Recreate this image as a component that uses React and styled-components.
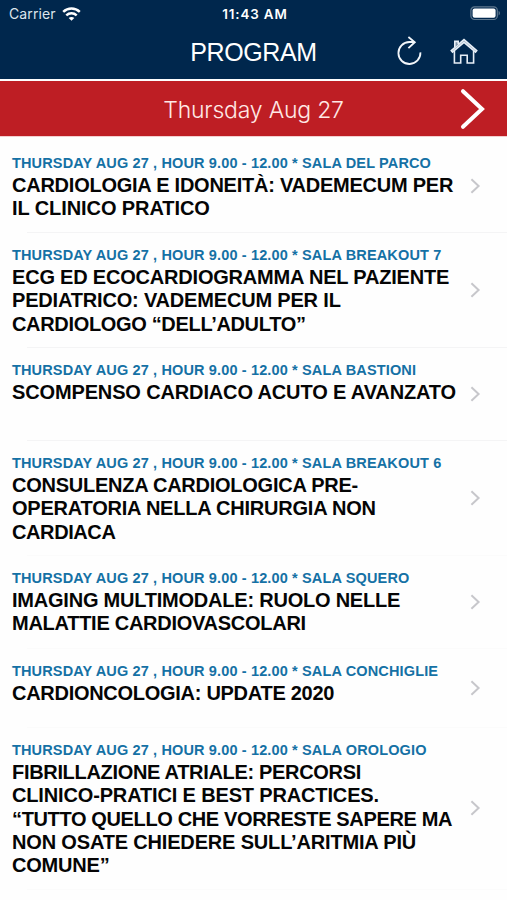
import React from 'react';
import styled, { createGlobalStyle } from 'styled-components';

// Each title line is [text, letter spacing in px]
const sessions = [
    {
        room: 'SALA DEL PARCO',
        height: 92,
        lines: [
            ['CARDIOLOGIA E IDONEITÀ: VADEMECUM PER', -0.24],
            ['IL CLINICO PRATICO', -0.08],
        ],
    },
    {
        room: 'SALA BREAKOUT 7',
        height: 115,
        lines: [
            ['ECG ED ECOCARDIOGRAMMA NEL PAZIENTE', -0.2],
            ['PEDIATRICO: VADEMECUM PER IL', -0.18],
            ['CARDIOLOGO “DELL’ADULTO”', -0.33],
        ],
    },
    {
        room: 'SALA BASTIONI',
        height: 93,
        lines: [['SCOMPENSO CARDIACO ACUTO E AVANZATO', -0.14]],
    },
    {
        room: 'SALA BREAKOUT 6',
        height: 115,
        faint: true,
        lines: [
            ['CONSULENZA CARDIOLOGICA PRE-', -0.25],
            ['OPERATORIA NELLA CHIRURGIA NON', -0.22],
            ['CARDIACA', -0.4],
        ],
    },
    {
        room: 'SALA SQUERO',
        height: 93,
        faint: true,
        lines: [
            ['IMAGING MULTIMODALE: RUOLO NELLE', -0.22],
            ['MALATTIE CARDIOVASCOLARI', -0.27],
        ],
    },
    {
        room: 'SALA CONCHIGLIE',
        height: 79,
        faint: true,
        lines: [['CARDIONCOLOGIA: UPDATE 2020', -0.28]],
    },
    {
        room: 'SALA OROLOGIO',
        height: 162,
        faint: true,
        lines: [
            ['FIBRILLAZIONE ATRIALE: PERCORSI', -0.32],
            ['CLINICO-PRATICI E BEST PRACTICES.', -0.15],
            ['“TUTTO QUELLO CHE VORRESTE SAPERE MA', -0.36],
            ['NON OSATE CHIEDERE SULL’ARITMIA PIÙ', -0.17],
            ['COMUNE”', -0.2],
        ],
    },
];

const App = () => (
    <Screen>
        <GlobalStyle />
        <StatusBar />
        <NavBar />
        <DayBar>
            <DayLabel>Thursday Aug 27</DayLabel>
            <NextDay>
                <NextIcon />
            </NextDay>
        </DayBar>
        <List>
            {sessions.map((session) => (
                <SessionRow key={session.room} {...session} />
            ))}
        </List>
    </Screen>
);

const StatusBar = () => (
    <Status>
        <Carrier>
            Carrier
            <WifiIcon />
        </Carrier>
        <Clock>11:43 AM</Clock>
        <BatterySlot>
            <BatteryIcon />
        </BatterySlot>
    </Status>
);

const NavBar = () => (
    <Nav>
        <NavTitle>PROGRAM</NavTitle>
        <NavActions>
            <IconButton aria-label="Refresh">
                <RefreshIcon />
            </IconButton>
            <IconButton aria-label="Home">
                <HomeIcon />
            </IconButton>
        </NavActions>
    </Nav>
);

const SessionRow = ({ room, lines, height, faint }) => (
    <Row $height={height} $faint={faint}>
        <Body>
            <Meta>THURSDAY AUG 27 , HOUR 9.00 - 12.00 * {room}</Meta>
            <Title>
                {lines.map(([text, tracking]) => (
                    <TitleLine key={text} $tracking={tracking}>
                        {text}
                    </TitleLine>
                ))}
            </Title>
        </Body>
        <Disclosure>
            <ChevronIcon />
        </Disclosure>
    </Row>
);

const WifiIcon = () => (
    <svg width="19" height="14" viewBox="0 0 19 14" fill="none" stroke="#fff" strokeWidth="2.5">
        <path d="M1.2 4.9C6 .4 13 .4 17.8 4.9" />
        <path d="M4.3 8.4c3-2.8 7.4-2.8 10.4 0" />
        <path d="M9.5 13.8 6.7 11c1.6-1.5 4-1.5 5.6 0z" fill="#fff" stroke="none" />
    </svg>
);

const BatteryIcon = () => (
    <svg width="31" height="15" viewBox="0 0 31 15">
        <rect x=".9" y=".9" width="26.4" height="12.6" rx="3.6" fill="none" stroke="#5f788f" strokeWidth="1.2" />
        <rect x="2.6" y="2.6" width="23" height="9.2" rx="2" fill="#fff" />
        <path d="M28.6 5c1.7.6 1.7 3.8 0 4.4z" fill="#5f788f" />
    </svg>
);

const RefreshIcon = () => (
    <svg width="26" height="30" viewBox="0 0 26 30" fill="none" stroke="#f2f6fa" strokeWidth="1.8">
        <path d="M24.4 16.4A11 11 0 1 1 13.4 6H18.4" />
        <path d="M12.4 1 18.8 6.2l-6.4 6" />
    </svg>
);

const HomeIcon = () => (
    <svg width="28" height="26" viewBox="0 0 28 26" fill="none" stroke="#e6eef6" strokeWidth="1.6">
        <path d="M1.3 12.7 14 1.6l12.7 11.1-1.2 1.4L14 4.4 2.5 14.1z" fill="#7f93a8" />
        <path d="M4.8 9.2V3.4h3.4v2.8" fill="#7f93a8" />
        <path d="M4.4 13v12h6.3v-7.8h6.5V25h6.4V13" />
    </svg>
);

const NextIcon = () => (
    <svg width="26" height="42" viewBox="0 0 26 42" fill="none" stroke="#fff" strokeWidth="4" strokeLinecap="round">
        <path d="M3 3.2 22 21 3 38.8" />
    </svg>
);

const ChevronIcon = () => (
    <svg width="11" height="16" viewBox="0 0 11 16" fill="none" stroke="#c7c7cb" strokeWidth="2">
        <path d="M1.4 1.3 8.6 8l-7.2 6.7" />
    </svg>
);

const GlobalStyle = createGlobalStyle`
    body {
        margin: 0;
        background: #fefefe;
        font-family: 'Liberation Sans', Arial, sans-serif;
    }
`;

const Screen = styled.div`
    display: flex;
    flex-direction: column;
    width: 507px;
    height: 900px;
    overflow: hidden;
    background: #fefefe;
`;

const Status = styled.div`
    display: grid;
    grid-template-columns: 1fr auto 1fr;
    align-items: center;
    height: 27px;
    padding: 0 6px 0 9px;
    box-sizing: border-box;
    background: #00274d;
    color: #fff;
    font-family: Inter, sans-serif;
    font-size: 13.4px;
`;

const Carrier = styled.div`
    display: flex;
    align-items: center;
    gap: 6px;
    color: #dde5ec;
    font-size: 14px;
    letter-spacing: 0.1px;
`;

const Clock = styled.div`
    font-weight: 600;
    letter-spacing: 0.85px;
`;

const BatterySlot = styled.div`
    display: flex;
    justify-content: flex-end;
`;

const Nav = styled.header`
    display: grid;
    grid-template-columns: 1fr auto 1fr;
    align-items: center;
    height: 52px;
    background: #00274d;
`;

const NavTitle = styled.h1`
    grid-column: 2;
    margin: 0;
    padding-bottom: 2px;
    color: #fff;
    font-size: 25px;
    font-weight: 400;
    letter-spacing: -0.4px;
    line-height: 50px;
`;

const NavActions = styled.div`
    display: flex;
    justify-content: flex-end;
    align-items: center;
    gap: 28px;
    padding: 0 29px 4px 0;
`;

const IconButton = styled.button`
    display: flex;
    padding: 0;
    border: 0;
    background: none;
`;

const DayBar = styled.div`
    display: grid;
    grid-template-columns: 1fr auto 1fr;
    align-items: center;
    height: 56px;
    margin-top: 2px;
    background: #be1e24;
    border-bottom: 1px solid #f3cfd0;
    box-sizing: border-box;
`;

const DayLabel = styled.h2`
    grid-column: 2;
    margin: 0;
    padding-top: 2px;
    color: #ffe9e6;
    font-family: Inter, sans-serif;
    font-size: 23px;
    font-weight: 300;
    letter-spacing: -0.2px;
`;

const NextDay = styled.div`
    display: flex;
    justify-content: flex-end;
    padding-right: 21px;
`;

const List = styled.main`
    display: flex;
    flex-direction: column;
    padding-top: 4px;
`;

const Row = styled.article`
    display: flex;
    flex: none;
    height: ${({ $height }) => $height}px;
    padding: 13px 26px 0 12px;
    box-sizing: border-box;
    border-bottom: 1px solid transparent;
    border-image: linear-gradient(
            90deg,
            transparent 28px,
            ${({ $faint }) => ($faint ? '#fbfbfb' : '#f4f4f5')} 28px
        )
        1;
`;

const Body = styled.div`
    flex: 1;
    min-width: 0;
    white-space: nowrap;
`;

const Meta = styled.div`
    color: #1571a5;
    font-size: 14.5px;
    font-weight: 700;
    letter-spacing: 0.14px;
    line-height: 18px;
`;

const Title = styled.h3`
    margin: 2px 0 0;
    color: #050505;
    font-size: 20px;
    font-weight: 700;
    line-height: 23.3px;
`;

const TitleLine = styled.span`
    display: block;
    letter-spacing: ${({ $tracking }) => $tracking}px;
`;

const Disclosure = styled.div`
    display: flex;
    align-items: center;
    margin-top: -14px;
`;

export default App;
